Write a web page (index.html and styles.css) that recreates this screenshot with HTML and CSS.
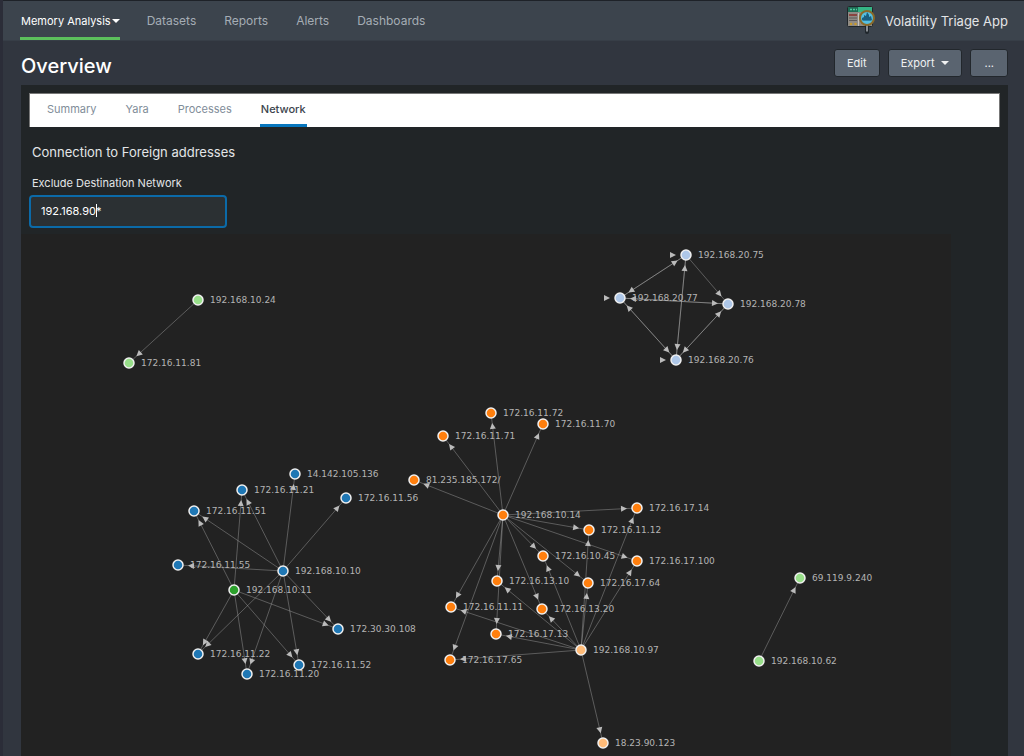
FILE: index.html
```html
<!DOCTYPE html>
<html lang="en">
<head>
  <meta charset="UTF-8" />
  <meta name="viewport" content="width=device-width, initial-scale=1.0"/>
  <title>Overview</title>
  <link rel="stylesheet" href="styles.css">
</head>
<body>
  <header class="app-bar">
    <nav class="app-nav">
      <a class="active" href="#">Memory Analysis<span class="arrow"></span></a>
      <a href="#">Datasets</a>
      <a href="#">Reports</a>
      <a href="#">Alerts</a>
      <a href="#">Dashboards</a>
    </nav>
    <a class="app-brand" href="#">
      <svg class="app-logo" width="28" height="28" viewBox="0 0 28 28" aria-hidden="true">
        <rect x="0.5" y="0.5" width="25" height="20" rx="1" fill="#8f8b85" stroke="#20262a"/>
        <rect x="1" y="1" width="24" height="5" fill="#35b585"/>
        <path d="M1 1h10v5H1z" fill="#1f6b55"/>
        <path d="M3 3.5h2M6 3.5h2M9 3.5h1" stroke="#4fd0a0" stroke-width="1.5"/>
        <rect x="2" y="8" width="8" height="2" fill="#8a4440"/>
        <path d="M2 12h8M2 14.5h8" stroke="#5e5a58"/>
        <path d="M11.5 7v13" stroke="#c9c5be"/>
        <circle cx="4" cy="18" r="1.3" fill="#c79a2e"/>
        <circle cx="8.5" cy="18" r="1.3" fill="#c79a2e"/>
        <path d="M20 20v6" stroke="#1f262b" stroke-width="4" stroke-linecap="round"/>
        <path d="M20 19v6.5" stroke="#a4a9ad" stroke-width="1.6"/>
        <circle cx="20" cy="12" r="7" fill="#55bfe0" stroke="#8a6a28" stroke-width="2"/>
        <path d="M15 14v-2l2-1v-2l2 1 1-4 2 3v2l2-1 1 4z" fill="#1b5f80"/>
        <path d="M15.5 14.5h9" stroke="#2b82a6"/>
      </svg>
      <span>Volatility Triage App</span>
    </a>
  </header>

  <div class="title-row">
    <h1>Overview</h1>
    <div class="actions">
      <button type="button">Edit</button>
      <button type="button">Export<span class="arrow"></span></button>
      <button type="button" class="more">...</button>
    </div>
  </div>

  <main class="dashboard">
    <nav class="tabs">
      <a href="#">Summary</a>
      <a href="#">Yara</a>
      <a href="#">Processes</a>
      <a class="active" href="#">Network</a>
    </nav>
    <section class="filter">
      <h2>Connection to Foreign addresses</h2>
      <label for="exclude">Exclude Destination Network</label>
      <div class="field">
        <input id="exclude" type="text" value="192.168.90*">
        <span class="caret"></span>
      </div>
    </section>
    <svg id="graph" class="graph" role="img" aria-label="Network connections"></svg>
  </main>

  <script src="graph.js"></script>
</body>
</html>
```
FILE: styles.css
```css
* { box-sizing: border-box; }
body {
  margin: 0;
  min-height: 100vh;
  display: flex;
  flex-direction: column;
  border-left: 3px solid #2b2d38;
  background: #31363f;
  color: #e3e5e7;
  font-family: Inter, "Liberation Sans", sans-serif;
  font-size: 11px;
}
a { color: inherit; text-decoration: none; }

.arrow {
  border: 4px solid transparent;
  border-top-color: currentColor;
  border-bottom: 0;
}

.app-bar {
  display: flex;
  justify-content: space-between;
  height: 41px;
  padding: 0 16px 0 17px;
  background: #3c444d;
  border-top: 1px solid #1e2228;
  border-bottom: 1px solid #373e47;
}
.app-nav { display: flex; gap: 26px; }
.app-nav a {
  display: flex;
  align-items: center;
  border-bottom: 3px solid transparent;
  padding: 3px 1px 0;
  color: #a5adb5;
  font-size: 12px;
}
.app-nav .active { color: #fff; border-color: #5cc05c; padding-right: 0; font-size: 11px; }
.app-nav .arrow { margin-left: 1px; }
.app-brand {
  display: flex;
  align-items: center;
  gap: 10px;
  font-size: 13px;
}
.app-logo { margin-bottom: 2px; }

.title-row {
  display: flex;
  align-items: center;
  justify-content: space-between;
  height: 44px;
  padding: 0 16px 0 18px;
}
h1 { margin: 6px 0 0; font-size: 20px; font-weight: 500; line-height: 24px; color: #fff; }
.actions { display: flex; gap: 8px; }
.actions button {
  display: flex;
  align-items: center;
  height: 28px;
  padding: 0 12px;
  border: 1px solid #22272c;
  border-radius: 3px;
  background: #5a6470;
  color: #f0f1f2;
  font: inherit;
}
.actions .arrow { margin-left: 7px; }
.actions .more { padding: 0 13px; }

.dashboard {
  flex: 1;
  display: flex;
  flex-direction: column;
  margin: 0 16px 0 18px;
  background: #212527;
}
.tabs {
  display: flex;
  gap: 27px;
  height: 34px;
  margin: 8px 8px 0;
  padding: 0 16px;
  background: #fff;
  border: 1px solid #777;
  border-bottom: 0;
}
.tabs a {
  display: flex;
  align-items: center;
  padding: 0 1px;
  border-bottom: 3px solid transparent;
  color: #818d99;
}
.tabs .active { color: #3c444d; border-color: #0877be; font-weight: 500; }

.filter { padding: 17px 8px 6px; }
h2 { margin: 0 3px 15px; font-size: 13px; font-weight: 400; line-height: 16px; }
.filter label { display: block; margin: 0 3px 4px; line-height: 16px; }
.field { position: relative; width: 198px; }
.field input {
  width: 100%;
  height: 33px;
  padding: 0 10px 1px;
  border: 2px solid #0b6aa8;
  border-radius: 4px;
  background: #2b3033;
  color: #fff;
  font: inherit;
  outline: 0;
  caret-color: transparent;
}
.caret {
  position: absolute;
  left: 67px; top: 9px;
  width: 1px; height: 13px;
  background: #fff;
}

.graph {
  flex: 1;
  width: calc(100% - 57px);
  min-height: 522px;
  background: #222;
}
.graph text { font: 9px "DejaVu Sans", sans-serif; fill: #b4b4b4; }
.graph circle { stroke: #f0f0f0; stroke-width: 1.5px; }
.graph line { stroke: #bbb; stroke-opacity: 0.38; }
.graph polygon { fill: #bbb; }
```
FILE: graph.js
```js
const colors = {
  blue: "#1f77b4", pale: "#aec7e8", orange: "#ff7f0e",
  peach: "#ffbb78", green: "#2ca02c", lime: "#98df8a"
};

// [address, x, y, group]
const nodes = [
  ["192.168.10.24", 177, 66, "lime"],
  ["172.16.11.81", 108, 129, "lime"],
  ["192.168.20.75", 665, 21, "pale"],
  ["192.168.20.77", 599, 64, "pale"],
  ["192.168.20.78", 707, 70, "pale"],
  ["192.168.20.76", 655, 126, "pale"],
  ["14.142.105.136", 274, 240, "blue"],
  ["172.16.11.21", 221, 256, "blue"],
  ["172.16.11.56", 325, 264, "blue"],
  ["172.16.11.51", 173, 277, "blue"],
  ["172.16.11.55", 157, 331, "blue"],
  ["192.168.10.10", 262, 337, "blue"],
  ["192.168.10.11", 213, 356, "green"],
  ["172.30.30.108", 317, 395, "blue"],
  ["172.16.11.22", 177, 420, "blue"],
  ["172.16.11.52", 278, 431, "blue"],
  ["172.16.11.20", 226, 440, "blue"],
  ["172.16.11.72", 470, 179, "orange"],
  ["172.16.11.70", 522, 190, "orange"],
  ["172.16.11.71", 422, 202, "orange"],
  ["81.235.185.172/", 393, 246, "orange"],
  ["192.168.10.14", 482, 281, "orange"],
  ["172.16.17.14", 616, 274, "orange"],
  ["172.16.11.12", 568, 296, "orange"],
  ["172.16.10.45", 522, 322, "orange"],
  ["172.16.17.100", 616, 327, "orange"],
  ["172.16.13.10", 476, 347, "orange"],
  ["172.16.17.64", 567, 349, "orange"],
  ["172.16.11.11", 430, 373, "orange"],
  ["172.16.13.20", 521, 375, "orange"],
  ["172.16.17.13", 475, 400, "orange"],
  ["192.168.10.97", 560, 416, "peach"],
  ["172.16.17.65", 429, 426, "orange"],
  ["18.23.90.123", 582, 509, "peach"],
  ["69.119.9.240", 779, 344, "lime"],
  ["192.168.10.62", 738, 427, "lime"]
];

const links = {
  "192.168.10.24": ["172.16.11.81"],
  "192.168.10.62": ["69.119.9.240"],
  "192.168.20.75": ["192.168.20.75", "192.168.20.76", "192.168.20.77", "192.168.20.78"],
  "192.168.20.76": ["192.168.20.75", "192.168.20.76", "192.168.20.77", "192.168.20.78"],
  "192.168.20.77": ["192.168.20.75", "192.168.20.76", "192.168.20.77", "192.168.20.78"],
  "192.168.20.78": ["192.168.20.76", "192.168.20.77"],
  "192.168.10.10": ["14.142.105.136", "172.16.11.21", "172.16.11.56", "172.16.11.51", "172.16.11.55",
    "172.30.30.108", "172.16.11.22", "172.16.11.52", "172.16.11.20"],
  "192.168.10.11": ["172.16.11.21", "172.16.11.51", "172.30.30.108", "172.16.11.22", "172.16.11.52", "172.16.11.20"],
  "192.168.10.14": ["172.16.11.72", "172.16.11.70", "172.16.11.71", "81.235.185.172/", "172.16.17.14",
    "172.16.11.12", "172.16.10.45", "172.16.17.100", "172.16.13.10", "172.16.17.64", "172.16.11.11",
    "172.16.13.20", "172.16.17.13", "172.16.17.65"],
  "192.168.10.97": ["172.16.17.14", "172.16.11.12", "172.16.10.45", "172.16.17.100", "172.16.13.10",
    "172.16.17.64", "172.16.11.11", "172.16.13.20", "172.16.17.13", "172.16.17.65", "18.23.90.123"]
};

const graph = document.getElementById("graph");

function add(name, attrs, text) {
  const el = document.createElementNS("http://www.w3.org/2000/svg", name);
  for (const key in attrs) el.setAttribute(key, attrs[key]);
  if (text) el.textContent = text;
  graph.appendChild(el);
}

const byName = {};
nodes.forEach(n => byName[n[0]] = n);

for (const from in links) {
  for (const to of links[from]) {
    const [, x1, y1] = byName[from];
    const [, x2, y2] = byName[to];
    // a link to itself has angle 0, so its arrow sits left of the node
    const angle = Math.atan2(y2 - y1, x2 - x1) * 180 / Math.PI;
    add("line", { x1, y1, x2, y2 });
    add("polygon", {
      points: "-16,-3 -10,0 -16,3",
      transform: `translate(${x2} ${y2}) rotate(${angle})`
    });
  }
}

for (const [name, x, y, group] of nodes) {
  add("circle", { cx: x, cy: y, r: 5, fill: colors[group] });
  add("text", { x: x + 12, y: y + 3 }, name);
}
```
